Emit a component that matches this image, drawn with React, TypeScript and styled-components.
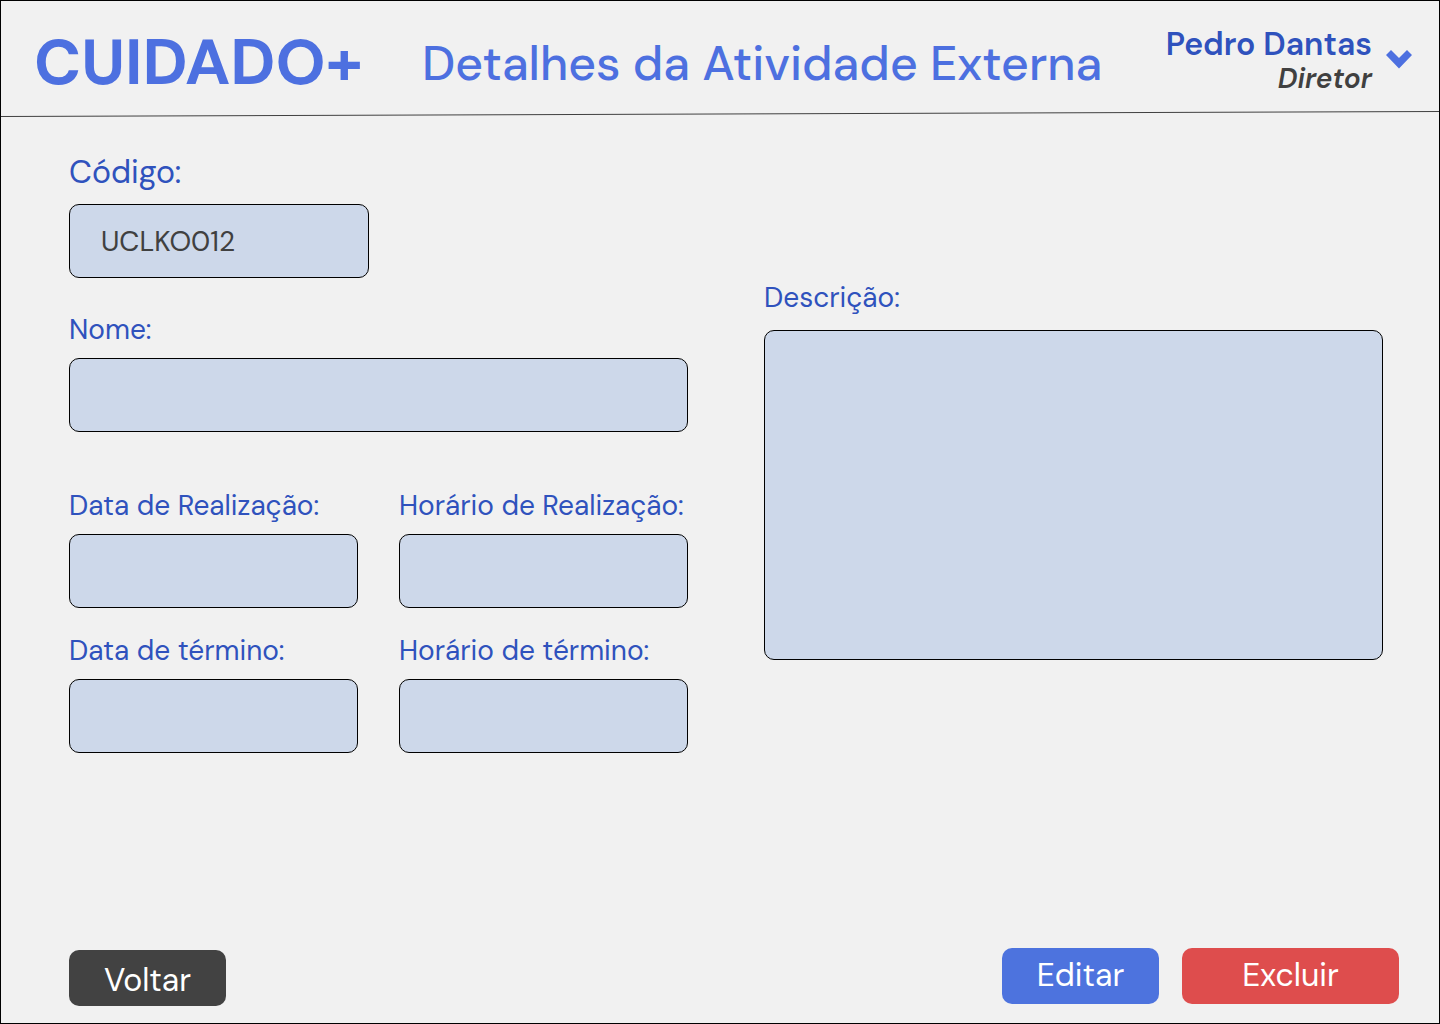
import React from "react";
import styled, { createGlobalStyle } from "styled-components";

const Global = createGlobalStyle`
  *, *::before, *::after { box-sizing: border-box; }
  body { margin: 0; background: #f1f1f1; font-family: "DM Sans", Inter, "Open Sans", sans-serif; }
`;

const Page = styled.div`
  min-height: 100vh;
  display: flex;
  flex-direction: column;
  background: #f1f1f1;
  border: 1px solid #000;
`;

const Header = styled.header`
  display: flex;
  align-items: center;
  height: 110px;
  padding: 0 27px 0 33px;
`;

const Brand = styled.span`
  flex: none;
  width: 388px;
  padding-top: 14px;
  font-size: 64px;
  line-height: 72px;
  font-weight: 700;
  color: #4d70e0;
`;

const Title = styled.h1`
  flex: 1;
  margin: 0;
  padding-top: 16px;
  font-size: 48px;
  line-height: 60px;
  font-weight: 500;
  color: #4d70e0;
  white-space: nowrap;
`;

const UserMenu = styled.button`
  display: flex;
  align-items: center;
  gap: 14px;
  padding: 10px 0 0;
  border: 0;
  background: none;
  font: inherit;
  text-align: right;
  cursor: pointer;
`;

const UserText = styled.span`
  display: flex;
  flex-direction: column;
`;

const UserName = styled.span`
  font-size: 32px;
  line-height: 36px;
  font-weight: 650;
  color: #2f52bd;
`;

const UserRole = styled.span`
  font-size: 28px;
  line-height: 34px;
  font-weight: 650;
  font-style: italic;
  color: #404040;
`;

const Divider = styled.svg`
  display: block;
  width: 100%;
  height: 6px;
`;

const Form = styled.form`
  flex: 1;
  display: flex;
  flex-direction: column;
  justify-content: space-between;
`;

const Columns = styled.div`
  display: grid;
  grid-template-columns: 1fr 1fr;
  gap: 76px;
  padding: 37px 56px 0 68px;
`;

const Fields = styled.div`
  display: grid;
  grid-template-columns: 1fr 1fr;
  column-gap: 41px;
  align-content: start;
`;

const Field = styled.div<{ $wide?: boolean; $top?: number; $gap?: number }>`
  display: flex;
  flex-direction: column;
  gap: ${(p) => p.$gap ?? 10}px;
  min-width: 0;
  grid-column: ${(p) => (p.$wide ? "1 / -1" : "auto")};
  margin-top: ${(p) => p.$top ?? 0}px;
`;

const Label = styled.label<{ $large?: boolean }>`
  font-size: ${(p) => (p.$large ? 32 : 28)}px;
  line-height: 36px;
  color: #2f52bd;
  white-space: nowrap;
`;

const Input = styled.input`
  width: 100%;
  height: 74px;
  padding: 0 31px;
  border: 1px solid #000;
  border-radius: 10px;
  background: #cdd8ea;
  font: inherit;
  font-size: 28px;
  color: #404040;
`;

const CodeInput = styled(Input)`
  width: 300px;
`;

const TextArea = styled.textarea`
  display: block;
  width: 100%;
  height: 330px;
  padding: 20px 31px;
  border: 1px solid #000;
  border-radius: 10px;
  background: #cdd8ea;
  font: inherit;
  font-size: 28px;
  color: #404040;
  resize: none;
`;

const Actions = styled.footer`
  display: flex;
  gap: 23px;
  padding: 0 40px 19px 68px;
`;

const Button = styled.button<{ $color: string; $width: number }>`
  width: ${(p) => p.$width}px;
  height: 56px;
  padding: 0 0 2px;
  border: 0;
  border-radius: 10px;
  background: ${(p) => p.$color};
  color: #fff;
  font: inherit;
  font-size: 32px;
  cursor: pointer;
`;

const BackButton = styled(Button)`
  margin: 2px auto -2px 0;
  padding: 4px 0 0;
`;

export default function App() {
  return (
    <Page>
      <Global />
      <Header>
        <Brand>CUIDADO+</Brand>
        <Title>Detalhes da Atividade Externa</Title>
        <UserMenu type="button">
          <UserText>
            <UserName>Pedro Dantas</UserName>
            <UserRole>Diretor</UserRole>
          </UserText>
          <svg width="26" height="22" viewBox="0 0 26 22" aria-hidden="true">
            <path d="M0 5 5 0 13 8 21 0 26 5 13 18.5Z" fill="#4d70e0" />
          </svg>
        </UserMenu>
      </Header>
      <Divider viewBox="0 0 1438 6" preserveAspectRatio="none" aria-hidden="true">
        <path d="M0 5.5 1438 .5" stroke="#404040" strokeWidth="1" />
      </Divider>
      <Form onSubmit={(e) => e.preventDefault()}>
        <Columns>
          <Fields>
            <Field $wide $gap={14}>
              <Label $large htmlFor="codigo">Código:</Label>
              <CodeInput id="codigo" defaultValue="UCLKO012" />
            </Field>
            <Field $wide $top={34}>
              <Label htmlFor="nome">Nome:</Label>
              <Input id="nome" />
            </Field>
            <Field $top={56}>
              <Label htmlFor="data-realizacao">Data de Realização:</Label>
              <Input id="data-realizacao" />
            </Field>
            <Field $top={56}>
              <Label htmlFor="hora-realizacao">Horário de Realização:</Label>
              <Input id="hora-realizacao" />
            </Field>
            <Field $top={25}>
              <Label htmlFor="data-termino">Data de término:</Label>
              <Input id="data-termino" />
            </Field>
            <Field $top={25}>
              <Label htmlFor="hora-termino">Horário de término:</Label>
              <Input id="hora-termino" />
            </Field>
          </Fields>
          <Field $top={126} $gap={14}>
            <Label htmlFor="descricao">Descrição:</Label>
            <TextArea id="descricao" />
          </Field>
        </Columns>
        <Actions>
          <BackButton type="button" $color="#424242" $width={157}>Voltar</BackButton>
          <Button type="button" $color="#4d73de" $width={157}>Editar</Button>
          <Button type="button" $color="#de4d4d" $width={217}>Excluir</Button>
        </Actions>
      </Form>
    </Page>
  );
}
